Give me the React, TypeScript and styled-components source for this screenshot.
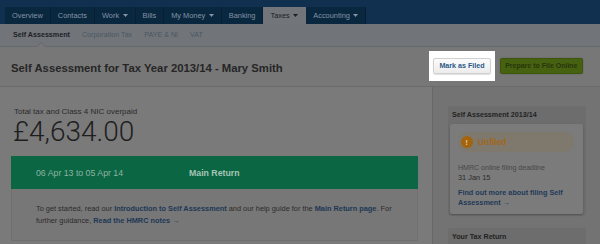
import React from 'react';
import styled, { createGlobalStyle } from 'styled-components';

const Global = createGlobalStyle`
  html, body { margin: 0; padding: 0; }
  body {
    background: #7a7a7a;
    font-family: "Liberation Sans", Arial, Helvetica, sans-serif;
    width: 600px;
    height: 244px;
    overflow: hidden;
  }
  * { box-sizing: border-box; }
`;

const TopBar = styled.header`
  height: 24px;
  background: #112f4e;
  padding: 7px 0 0 5px;
  display: flex;
  align-items: stretch;
`;

const Tab = styled.div<{ $active?: boolean }>`
  display: flex;
  align-items: center;
  gap: 3.5px;
  height: 17px;
  padding: 0 7px;
  background: ${p => (p.$active ? '#72767b' : '#0a2740')};
  color: ${p => (p.$active ? '#1d2124' : '#8394a4')};
  border-right: 1px solid ${p => (p.$active ? '#72767b' : '#071e35')};
  font-size: 7.4px;
  white-space: nowrap;
`;

const Caret = styled.svg`
  width: 5px;
  height: 3px;
  fill: currentColor;
`;

const SubNav = styled.nav`
  height: 23px;
  background: #71757a;
  border-bottom: 1px solid #65696d;
  display: flex;
  align-items: center;
  gap: 12px;
  padding-left: 13px;
  font-size: 7.15px;
`;

const SubItem = styled.span<{ $active?: boolean }>`
  position: relative;
  height: 100%;
  display: flex;
  align-items: center;
  color: ${p => (p.$active ? '#1e2125' : '#4b5662')};
  font-weight: ${p => (p.$active ? 700 : 400)};
  white-space: nowrap;
  ${p =>
    p.$active &&
    `
    &::before {
      content: '';
      position: absolute;
      left: 50%;
      bottom: -1px;
      margin-left: -5px;
      border-left: 5px solid transparent;
      border-right: 5px solid transparent;
      border-bottom: 5px solid #65696d;
    }
    &::after {
      content: '';
      position: absolute;
      left: 50%;
      bottom: -1px;
      margin-left: -4px;
      border-left: 4px solid transparent;
      border-right: 4px solid transparent;
      border-bottom: 4px solid #777777;
    }
  `}
`;

const PageHeader = styled.div`
  height: 40px;
  background: #777777;
  border-bottom: 1px solid #6b6b6b;
  display: flex;
  align-items: center;
  justify-content: space-between;
  padding: 0 17px 0 11px;
`;

const Title = styled.h1`
  margin: 0;
  font-size: 11.3px;
  font-weight: 700;
  color: #262626;
  white-space: nowrap;
  padding-top: 2px;
`;

const Actions = styled.div`
  display: flex;
  align-items: center;
  gap: 5px;
  margin-top: -2px;
`;

const Spotlight = styled.div`
  background: #ffffff;
  padding: 7px 4px;
  display: flex;
`;

const LightButton = styled.button`
  height: 16px;
  padding: 0 5px;
  background: linear-gradient(#fbfbfb, #ececec);
  border: 1px solid #d0d0d0;
  border-radius: 2px;
  box-shadow: 0 1px 1px rgba(0, 0, 0, 0.12);
  color: #2b5a88;
  font-family: inherit;
  font-size: 7.15px;
  font-weight: 700;
  white-space: nowrap;
`;

const GreenButton = styled.button`
  height: 16px;
  padding: 0 4.5px;
  background: #466210;
  border: 1px solid #3c560b;
  border-radius: 2px;
  box-shadow: 0 0 2px rgba(0, 0, 0, 0.2);
  color: #27360d;
  font-family: inherit;
  font-size: 7px;
  font-weight: 700;
  white-space: nowrap;
`;

const Main = styled.main`
  display: flex;
  height: 157px;
`;

const LeftColumn = styled.section`
  width: 432px;
  flex: none;
  padding: 20px 14px 0 11px;
`;

const Label = styled.div`
  font-size: 8px;
  line-height: 10px;
  color: #2a2a2a;
  padding-left: 3px;
  white-space: nowrap;
`;

const Amount = styled.div`
  font-family: Roboto, "Liberation Sans", sans-serif;
  font-weight: 300;
  font-size: 28px;
  line-height: 30px;
  color: #1e1e1e;
  padding-left: 2px;
  margin-bottom: 9px;
`;

const Band = styled.div`
  height: 33px;
  background: #0b6643;
  display: grid;
  grid-template-columns: 153px 1fr;
  align-items: center;
  padding-left: 25px;
  font-size: 8.75px;
  white-space: nowrap;
`;

const BandDate = styled.span`
  color: #8db3a0;
`;

const BandTitle = styled.span`
  color: #a5c5b4;
  font-weight: 700;
`;

const Panel = styled.div`
  background: #777777;
  border: 1px solid #6f6f6f;
  border-top: none;
  padding: 14px 20px 13px 24px;
  font-size: 7.36px;
  line-height: 12px;
  color: #2b2b2b;
  white-space: nowrap;
`;

const Link = styled.a`
  color: #1d3755;
  font-weight: 700;
  text-decoration: none;
`;

const Sidebar = styled.aside`
  flex: 1;
  background: #737373;
  border-left: 1px solid #686868;
  padding: 19px 14px 0 15px;
  display: flex;
  flex-direction: column;
  gap: 12px;
`;

const Card = styled.div`
  background: #6d6d6d;
  border-radius: 3px;
  padding: 0 3px 2px 2px;
`;

const CardHeader = styled.div`
  height: 18px;
  display: flex;
  align-items: center;
  padding-left: 2px;
  font-size: 7.15px;
  font-weight: 700;
  color: #232323;
  white-space: nowrap;
`;

const CardBody = styled.div`
  background: #7b7b7b;
  border-radius: 2px;
  box-shadow: 0 1px 2px rgba(0, 0, 0, 0.25);
  padding: 8px 9px 5.5px 8px;
`;

const Pill = styled.div`
  height: 20px;
  border-radius: 10px;
  background: #7e786d;
  display: flex;
  align-items: center;
  gap: 5.5px;
  padding-left: 2.5px;
  font-size: 8.4px;
  font-weight: 700;
  color: #a2671c;
`;

const AlertIcon = styled.span`
  width: 12px;
  height: 12px;
  border-radius: 50%;
  background: #a3640b;
  color: #dcc39c;
  font-size: 8px;
  font-weight: 700;
  display: flex;
  align-items: center;
  justify-content: center;
`;

const Muted = styled.div`
  margin-top: 11px;
  font-size: 7.05px;
  line-height: 9.5px;
  color: #474747;
  white-space: nowrap;
`;

const DateText = styled.div`
  font-size: 7.4px;
  line-height: 9.5px;
  color: #2c2c2c;
`;

const SideLink = styled.a`
  display: block;
  margin-top: 5.5px;
  font-size: 7.25px;
  line-height: 10.5px;
  font-weight: 700;
  color: #1e3a58;
  text-decoration: none;
  white-space: nowrap;
`;

const tabs: { label: string; menu?: boolean; active?: boolean }[] = [
  { label: 'Overview' },
  { label: 'Contacts' },
  { label: 'Work', menu: true },
  { label: 'Bills' },
  { label: 'My Money', menu: true },
  { label: 'Banking' },
  { label: 'Taxes', menu: true, active: true },
  { label: 'Accounting', menu: true },
];

const subItems = ['Self Assessment', 'Corporation Tax', 'PAYE & NI', 'VAT'];

export default function App() {
  return (
    <>
      <Global />
      <TopBar>
        {tabs.map(t => (
          <Tab key={t.label} $active={t.active}>
            {t.label}
            {t.menu && (
              <Caret viewBox="0 0 5 3">
                <path d="M0 0h5L2.5 3z" />
              </Caret>
            )}
          </Tab>
        ))}
      </TopBar>
      <SubNav>
        {subItems.map((s, i) => (
          <SubItem key={s} $active={i === 0}>
            {s}
          </SubItem>
        ))}
      </SubNav>
      <PageHeader>
        <Title>Self Assessment for Tax Year 2013/14 - Mary Smith</Title>
        <Actions>
          <Spotlight>
            <LightButton>Mark as Filed</LightButton>
          </Spotlight>
          <GreenButton>Prepare to File Online</GreenButton>
        </Actions>
      </PageHeader>
      <Main>
        <LeftColumn>
          <Label>Total tax and Class 4 NIC overpaid</Label>
          <Amount>£4,634.00</Amount>
          <Band>
            <BandDate>06 Apr 13 to 05 Apr 14</BandDate>
            <BandTitle>Main Return</BandTitle>
          </Band>
          <Panel>
            To get started, read our <Link href="#">Introduction to Self Assessment</Link> and our
            help guide for the <Link href="#">Main Return page</Link>. For
            <br />
            further guidance, <Link href="#">Read the HMRC notes →</Link>
          </Panel>
        </LeftColumn>
        <Sidebar>
          <Card>
            <CardHeader>Self Assessment 2013/14</CardHeader>
            <CardBody>
              <Pill>
                <AlertIcon>!</AlertIcon>
                Unfiled
              </Pill>
              <Muted>HMRC online filing deadline</Muted>
              <DateText>31 Jan 15</DateText>
              <SideLink href="#">
                Find out more about filing Self
                <br />
                Assessment →
              </SideLink>
            </CardBody>
          </Card>
          <Card>
            <CardHeader>Your Tax Return</CardHeader>
          </Card>
        </Sidebar>
      </Main>
    </>
  );
}
